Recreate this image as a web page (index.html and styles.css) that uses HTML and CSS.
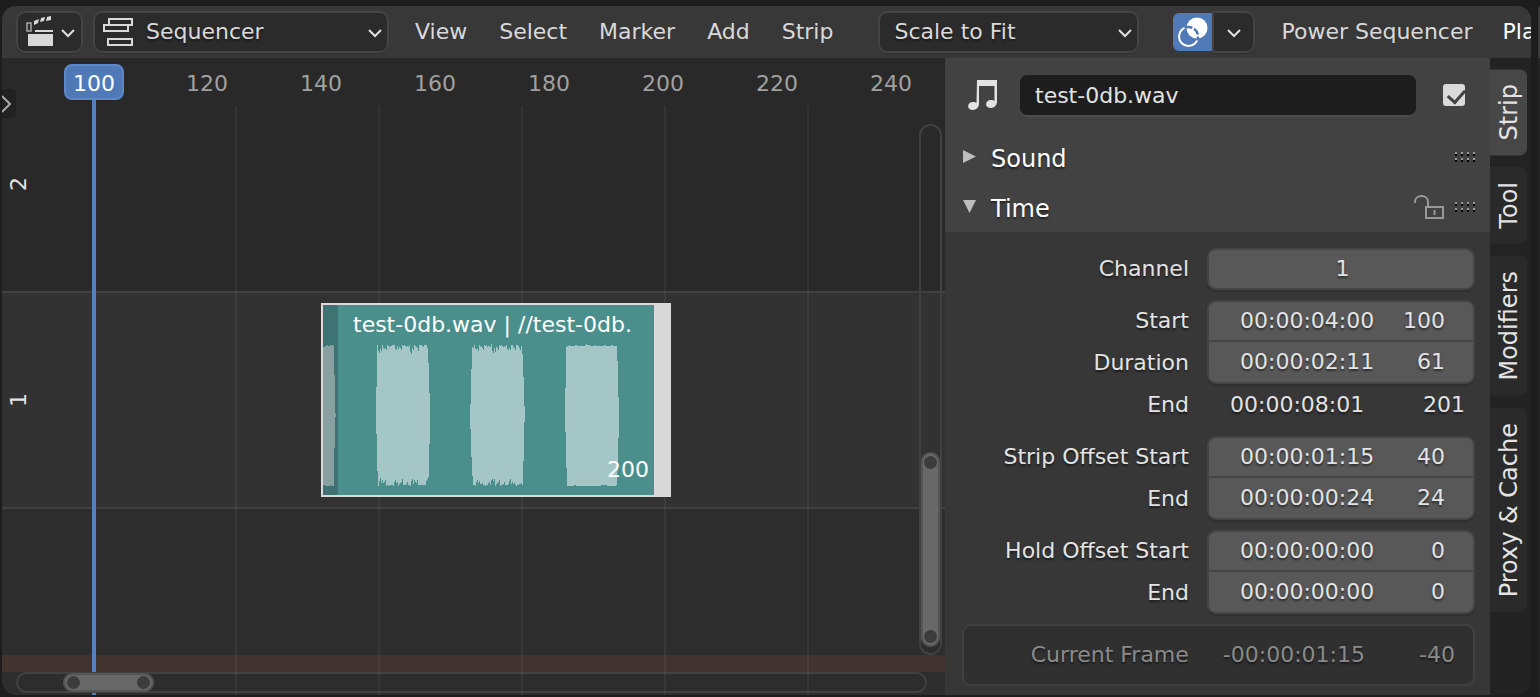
FILE: index.html
```html
<!DOCTYPE html>
<html lang="en">
<head>
<meta charset="utf-8">
<title>Video Sequencer</title>
<link rel="stylesheet" href="styles.css">
</head>
<body>
<div class="area">
  <header class="header">
    <button class="editor-type" aria-label="Editor type">
      <svg width="30" height="32" viewBox="0 0 30 32" aria-hidden="true">
        <path fill="none" stroke="#aaa" stroke-width="1.5" d="M2 7h4v8H2z"/>
        <path fill="#d9d9d9" d="M3 18h25v12H3zM10 14h18v2H10zM9 5l5-2-1 4-4 2zM16 2l4-1-1 4-4 1zM22 1l4-1v4l-5 1z"/>
      </svg>
      <svg class="chevron" viewBox="0 0 14 9" aria-hidden="true"><path d="M1 1l6 6 6-6"/></svg>
    </button>
    <div class="dropdown dropdown-mode">
      <svg class="mode-icon" width="30" height="30" viewBox="0 0 30 30" aria-hidden="true"><path fill="none" stroke="#d9d9d9" stroke-width="2" d="M6 7V2h23v6h-4M1 8h24v6H1zM5 22h24v6H5z"/></svg>
      <select aria-label="View type"><option>Sequencer</option></select>
      <svg class="chevron" viewBox="0 0 14 9" aria-hidden="true"><path d="M1 1l6 6 6-6"/></svg>
    </div>
    <nav class="menus">
      <button>View</button><button>Select</button><button>Marker</button><button>Add</button><button>Strip</button>
    </nav>
    <div class="dropdown dropdown-fit">
      <select aria-label="Image fit method"><option>Scale to Fit</option></select>
      <svg class="chevron" viewBox="0 0 14 9" aria-hidden="true"><path d="M1 1l6 6 6-6"/></svg>
    </div>
    <div class="overlay-group">
      <button class="overlay-toggle" aria-label="Show overlays">
        <svg width="32" height="32" viewBox="0 0 32 32" aria-hidden="true">
          <circle cx="20" cy="12" r="10.500" fill="#fff"/>
          <circle cx="11.500" cy="20.500" r="9.500" fill="none" stroke="#fff" stroke-width="2"/>
          <path fill="none" stroke="#5079b7" stroke-width="2.500" d="M7.500 11.900a9.500 9.500 0 0 1 4-.9a9.500 9.500 0 0 1 9.500 9.500a9.500 9.500 0 0 1-.9 4" stroke-dasharray="8 2 7 2 10"/>
        </svg>
      </button>
      <button class="overlay-menu" aria-label="Overlay options"><svg class="chevron" viewBox="0 0 14 9" aria-hidden="true"><path d="M1 1l6 6 6-6"/></svg></button>
    </div>
    <nav class="addon-menus"><button>Power Sequencer</button><button class="bright">Pla</button></nav>
  </header>

  <main class="main">
    <section class="timeline" aria-label="Timeline">
      <div class="lane lane-2"><span class="lane-label">2</span></div>
      <div class="lane lane-1"><span class="lane-label">1</span></div>
      <div class="lane-rest"><div class="below-zero"></div></div>

      <div class="playhead"></div>
      <div class="scroll-h"><div class="thumb-h"><i></i><i></i></div></div>
      <div class="grid-lines"><i></i><i></i><i></i><i></i><i></i></div>
      <div class="ruler"><span class="frame-now">100</span><span>120</span><span>140</span><span>160</span><span>180</span><span>200</span><span>220</span><span>240</span></div>
      <div class="strip">
        <svg class="wave" viewBox="0 0 331 190" shape-rendering="crispEdges" aria-hidden="true">
          <path fill="#3d7373" d="M0 0h15v190H0z"/>
          <path fill="#89a0a1" d="M0 42H2V41H4V40H5V41H7V40H10V41H11V70H12V108H13V112H12V143H11V181H8V180H7V181H2V180H0z"/>
          <g fill="#a5c6c7">
            <path d="M54 40H55V46H56V48H57V44H58V46H59V40H60V43H61V44H62V43H63V45H64V40H65V41H66V42H67V41H69V40H72V44H73V45H74V41H75V44H76V42H77V43H78V45H79V40H80V41H81V40H82V41H83V42H84V41H85V42H86V40H87V47H88V49H89V43H90V45H91V40H92V41H93V42H94V43H95V46H96V40H99V41H100V42H101V40H104V43H105V58H106V88H107V139H106V172H105V174H104V176H103V180H95V175H94V178H93V177H92V175H91V179H90V174H89V176H88V181H87V180H85V177H84V179H83V180H80V174H79V177H78V178H77V179H76V181H75V177H74V178H73V175H72V177H71V181H70V180H67V181H66V180H64V181H63V175H62V177H61V178H60V175H59V178H58V173H57V176H56V181H55V166H54V129H53V82H54z"/>
            <path d="M149 42H150V43H151V40H152V44H155V46H156V40H157V41H158V42H159V43H160V45H161V40H162V41H163V40H164V42H165V41H167V42H168V39H169V46H170V48H171V43H172V47H173V42H174V43H175V45H176V40H177V41H178V40H179V41H180V42H181V41H182V42H183V40H184V44H185V45H186V43H187V45H188V40H190V42H191V43H192V45H193V40H195V41H196V43H197V45H198V41H199V49H200V72H201V101H202V117H201V156H200V180H199V178H198V179H196V180H194V181H193V180H192V178H191V179H190V177H189V179H188V174H187V176H186V179H185V180H182V177H181V179H180V180H178V181H177V175H176V177H175V178H174V179H173V181H172V174H171V176H170V174H169V175H168V180H167V177H166V178H165V180H163V181H162V180H160V178H159V179H157V176H156V178H155V175H154V177H153V181H152V180H150V171H149V152H148V124H147V99H148V64H149z"/>
            <path d="M243 42H244V41H246V40H247V41H252V40H254V41H262V40H263V39H264V40H267V41H272V40H273V41H281V40H283V41H288V40H290V41H294V56H295V92H296V133H295V166H294V180H293V181H284V180H278V181H253V180H251V181H244V163H243V127H242V83H243z"/>
          </g>
        </svg>
        <span class="strip-title">test-0db.wav | //test-0db.</span>
        <span class="strip-end">200</span>
      </div>
      <div class="scroll-v"><div class="thumb-v"><i></i><i></i></div></div>
      <button class="toolbar-toggle" aria-label="Show toolbar"><svg width="12" height="18" viewBox="0 0 12 18" aria-hidden="true"><path fill="none" stroke="#aaa" stroke-width="2" d="M0 1l8 8-8 8"/></svg></button>
    </section>

    <aside class="sidebar">
      <div class="panel-heads">
        <div class="name-row">
          <svg width="31" height="30" viewBox="0 0 31 30" aria-hidden="true"><path fill="#e3e3e3" d="M10 0h20v22c0 3-3 6-6 6-7 0-6-8 0-8 1.500 0 2.500.3 3.500.8V6H12v18c0 3-3 6-6 6-7 0-6-8 0-8 1.500 0 2.500.3 3.500.8z"/></svg>
          <input class="name" type="text" value="test-0db.wav" aria-label="Strip name">
          <input class="enabled" type="checkbox" checked aria-label="Enable strip">
        </div>
        <div class="panel-head">
          <button class="disclose"><svg width="14" height="14" viewBox="0 0 14 14" aria-hidden="true"><path fill="#bdbdbd" d="M1 0l13 6.500-13 6.500z"/></svg><span>Sound</span></button>
          <span class="grip"><i></i><i></i><i></i><i></i></span>
        </div>
        <div class="panel-head">
          <button class="disclose"><svg width="14" height="14" viewBox="0 0 14 14" aria-hidden="true"><path fill="#bdbdbd" d="M1 0h13L7.500 13z"/></svg><span>Time</span></button>
          <button class="lock" aria-label="Lock strip"><svg width="30" height="24" viewBox="0 0 30 24" aria-hidden="true"><path fill="none" stroke="#999" stroke-width="2" d="M1 8V7c0-8 13-8 13 0v4M12 12h17v11H12z"/><path fill="#999" d="M19.500 15h2v5h-2z"/></svg></button>
          <span class="grip"><i></i><i></i><i></i><i></i></span>
        </div>
      </div>

      <form class="time">
        <div class="group">
          <label for="channel">Channel</label>
          <div class="fields"><div class="field"><input class="single" id="channel" value="1"></div></div>
        </div>
        <div class="group">
          <label for="start">Start</label>
          <label for="duration">Duration</label>
          <div class="fields">
            <div class="field"><input id="start" value="00:00:04:00"><output for="start">100</output></div>
            <div class="field"><input id="duration" value="00:00:02:11"><output for="duration">61</output></div>
          </div>
          <span class="row-label">End</span>
          <div class="plain"><span>00:00:08:01</span><span>201</span></div>
        </div>
        <div class="group">
          <label for="offset-start">Strip Offset Start</label>
          <label for="offset-end">End</label>
          <div class="fields">
            <div class="field"><input id="offset-start" value="00:00:01:15"><output for="offset-start">40</output></div>
            <div class="field"><input id="offset-end" value="00:00:00:24"><output for="offset-end">24</output></div>
          </div>
        </div>
        <div class="group">
          <label for="hold-start">Hold Offset Start</label>
          <label for="hold-end">End</label>
          <div class="fields">
            <div class="field"><input id="hold-start" value="00:00:00:00"><output for="hold-start">0</output></div>
            <div class="field"><input id="hold-end" value="00:00:00:00"><output for="hold-end">0</output></div>
          </div>
        </div>
        <div class="current"><span>Current Frame</span><span class="current-time">-00:00:01:15</span><span class="current-frame">-40</span></div>
      </form>
    </aside>

    <nav class="tabs">
      <button class="tab active">Strip</button>
      <button class="tab">Tool</button>
      <button class="tab">Modifiers</button>
      <button class="tab">Proxy &amp; Cache</button>
    </nav>
  </main>
</div>
<div class="next-area"></div>
</body>
</html>
```

FILE: styles.css
```css
* { box-sizing: border-box; }

body {
  margin: 0;
  padding: 6px 0 2px 2px;
  min-height: 100vh;
  display: flex;
  gap: 7px;
  overflow: hidden;
  background: #1d1d1d;
  color: #e3e3e3;
  font: 22px/26px "DejaVu Sans", sans-serif;
}

button, input, select {
  margin: 0;
  padding: 0;
  border: 0;
  background: none;
  color: inherit;
  font: inherit;
}

.area {
  flex: 1;
  min-width: 0;
  display: flex;
  flex-direction: column;
  overflow: hidden;
  border-radius: 14px;
  background: #232323;
}

.next-area {
  flex: 0 0 2px;
  background: linear-gradient(#383838 52px, #232323 52px);
  border-top-left-radius: 14px;
}

/* Header */
.header {
  height: 52px;
  padding-left: 14px;
  display: flex;
  align-items: center;
  background: #383838;
  color: #d9d9d9;
  text-shadow: 0 2px 2px rgba(0, 0, 0, 0.4);
  overflow: hidden;
}

.header > * { flex: none; }

.chevron {
  width: 14px;
  height: 9px;
  fill: none;
  stroke: #e0e0e0;
  stroke-width: 2;
}

.editor-type, .dropdown, .overlay-menu {
  height: 42px;
  border: 2px solid #444;
  border-radius: 9px;
  background: #2b2b2b;
  box-shadow: 0 1px 1px #303030;
}

.editor-type {
  width: 67px;
  margin-right: 10px;
  display: flex;
  align-items: center;
  justify-content: center;
  gap: 6px;
}

.dropdown {
  position: relative;
  display: flex;
  align-items: center;
}

.dropdown select {
  appearance: none;
  width: 100%;
  height: 100%;
  text-shadow: inherit;
}

.dropdown .chevron { position: absolute; right: 5px; pointer-events: none; }
.editor-type .chevron, .dropdown .chevron, .overlay-menu .chevron { margin-top: 2px; }
.dropdown-mode { width: 296px; }
.dropdown-mode select { padding-left: 51px; }
.mode-icon { position: absolute; left: 8px; pointer-events: none; }
.dropdown-fit { width: 261px; margin: 0 34px 0 45px; }
.dropdown-fit select { padding-left: 14px; }

.menus { display: flex; gap: 32px; margin-left: 26px; }
.addon-menus { display: flex; gap: 30px; margin-left: 26px; }
.bright { color: #fff; }

.overlay-group { display: flex; align-items: center; width: 82px; }

.overlay-toggle {
  display: flex;
  align-items: center;
  justify-content: center;
  width: 39px;
  height: 38px;
  border-radius: 6px 0 0 6px;
  background: #5079b7;
}

.overlay-menu { flex: 1; border-radius: 0 9px 9px 0; display: flex; align-items: center; justify-content: center; }

/* Timeline */
.main { flex: 1; display: flex; }

.timeline {
  position: relative;
  flex: 1;
  min-width: 0;
  display: flex;
  flex-direction: column;
  overflow: hidden;
  background: #2d2d2d;
}

.lane { display: flex; align-items: center; border-bottom: 2px solid #414141; padding-left: 4px; }
.lane-2 { height: 235px; padding-top: 18px; background: #292929; }
.lane-1 { height: 216px; background: #323232; }
.lane-label { writing-mode: vertical-rl; transform: rotate(180deg); }

.lane-rest { flex: 1; display: flex; flex-direction: column; justify-content: flex-end; padding-bottom: 23px; }
.below-zero { height: 17px; background: #43332f; }

.ruler { position: absolute; top: 6px; left: 34px; display: flex; color: #a0a0a0; text-align: center; }
.ruler span { width: 114px; line-height: 36px; padding-top: 2px; }
.ruler .frame-now {
  width: 60px;
  height: 36px;
  margin: 0 26px 0 28px;
  padding: 0;
  border: 2px solid #5d88ca;
  border-radius: 8px;
  background: #5079b7;
  color: #fff;
}

.playhead { position: absolute; top: 40px; bottom: 0; left: 90px; width: 4px; background: #5680c2; }

.grid-lines { position: absolute; top: 48px; bottom: 0; left: 233px; display: flex; gap: 141px; }
.grid-lines i { width: 2px; background: rgba(255, 255, 255, 0.05); }

.strip {
  position: absolute;
  top: 245px;
  left: 319px;
  width: 350px;
  height: 194px;
  border: 2px solid #d9d9d9;
  border-right-width: 17px;
  background: #4b8f8d;
  color: #fff;
}

.wave { display: block; width: 100%; height: 100%; }
.strip-title { position: absolute; top: 7px; left: 30px; white-space: nowrap; }
.strip-end { position: absolute; right: 5px; bottom: 12px; }

.scroll-h, .scroll-v { position: absolute; border: 2px solid #414141; border-radius: 12px; }
.scroll-h { left: 14px; right: 18px; bottom: 2px; height: 21px; background: #2d2d2d; }
.scroll-v { top: 66px; right: 3px; bottom: 40px; width: 23px; }

.thumb-h, .thumb-v {
  position: absolute;
  display: flex;
  justify-content: space-between;
  border: 2px solid #555;
  border-radius: 12px;
  background: #686868;
}

.thumb-h { left: 45px; top: -1px; width: 91px; height: 19px; padding: 1px 2px; }
.thumb-v { left: 0; bottom: 6px; width: 19px; height: 195px; padding: 2px 1px; flex-direction: column; }
.thumb-h i, .thumb-v i { width: 13px; height: 13px; border-radius: 50%; background: #3c3c3c; }

.toolbar-toggle {
  position: absolute;
  top: 31px;
  left: 0;
  width: 14px;
  height: 29px;
  display: flex;
  align-items: center;
  border-radius: 0 5px 5px 0;
  background: #212121;
}

/* Sidebar */
.sidebar { flex: 0 0 545px; background: #373737; text-shadow: 0 2px 2px rgba(0, 0, 0, 0.5); }
.panel-heads { padding: 17px 15px 0 17px; background: #424242; }
.name-row { display: flex; align-items: center; height: 40px; margin-bottom: 17px; padding: 0 10px 0 5px; }

.name {
  flex: 1;
  min-width: 0;
  height: 40px;
  margin: 0 27px 0 22px;
  padding: 0 15px;
  border-radius: 7px;
  background: #1d1d1d;
  box-shadow: 0 2px 0 #4b4b4b;
}

.enabled {
  appearance: none;
  width: 22px;
  height: 22px;
  padding: 2px 0 0 8px;
  border-radius: 3px;
  background: #dadada;
}

.enabled:checked::before {
  content: "";
  display: block;
  width: 8px;
  height: 14px;
  border: solid #424242;
  border-width: 0 3px 3px 0;
  transform: rotate(42deg);
}

.panel-head { display: flex; align-items: center; height: 50px; color: #fff; font-size: 24px; }
.disclose { flex: 1; display: flex; align-items: center; gap: 15px; text-shadow: inherit; }
.disclose span { padding-top: 3px; }
.lock { display: flex; margin-right: 11px; }

.grip { display: flex; gap: 4px; }
.grip i { width: 2px; height: 10px; background: linear-gradient(#999 2px, #000 2px, #000 4px, transparent 4px, transparent 6px, #999 6px, #999 8px, #000 8px); }

.time { display: flex; flex-direction: column; gap: 10px; padding: 16px 15px 8px 17px; }

.group {
  display: grid;
  grid-template-columns: 1fr 268px;
  grid-auto-rows: 42px;
  column-gap: 18px;
  align-items: center;
}

.group label, .row-label { grid-column: 1; text-align: right; }

.fields {
  grid-column: 2;
  grid-row: 1 / span 2;
  align-self: start;
  border: 2px solid #454545;
  border-radius: 9px;
  background: #585858;
  box-shadow: 0 2px 1px #303030;
}

.field { display: flex; align-items: center; justify-content: space-between; height: 38px; padding: 0 28px 0 31px; }
.field + .field { height: 42px; border-top: 2px solid #454545; }
.field input { width: 140px; text-shadow: inherit; }
.field input.single { width: 100%; text-align: center; }
.group:first-child .fields { grid-row: 1; }

.plain { grid-column: 2; display: flex; justify-content: space-between; padding: 0 10px 0 23px; }

.current {
  display: flex;
  align-items: center;
  justify-content: flex-end;
  height: 62px;
  padding-right: 18px;
  border: 2px solid #404040;
  border-radius: 9px;
  background: #303030;
  color: #8a8a8a;
}

.current-time { margin-left: 34px; }
.current-frame { width: 90px; text-align: right; }

/* Tabs */
.tabs {
  flex: 0 0 41px;
  display: flex;
  flex-direction: column;
  gap: 12px;
  padding: 11px 4px 0 0;
}

.tab {
  width: 37px;
  padding: 15px 5px;
  border-radius: 7px 0 0 7px;
  background: #2a2a2a;
  font-size: 24px;
  writing-mode: vertical-rl;
  transform: rotate(180deg);
  white-space: nowrap;
}

.tab.active { background: #474747; }
```
